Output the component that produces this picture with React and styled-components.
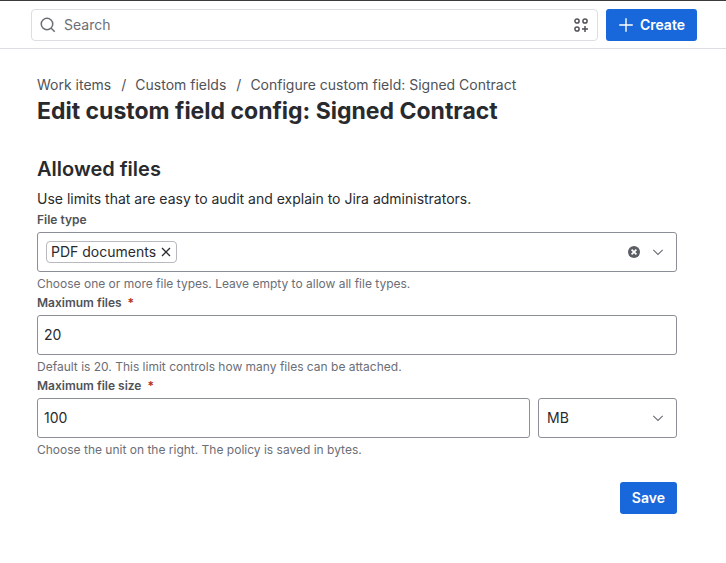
import React, { useState } from 'react'
import styled, { createGlobalStyle } from 'styled-components'

const App = () => {
    const [types, setTypes] = useState(['PDF documents'])
    const [maxFiles, setMaxFiles] = useState('20')
    const [maxSize, setMaxSize] = useState('100')
    const [unit, setUnit] = useState('MB')

    return (
        <>
            <GlobalStyle />
            <TopBar>
                <SearchBox>
                    <SearchIcon />
                    <SearchInput type="search" placeholder="Search" aria-label="Search" />
                    <IconButton type="button" aria-label="Browse apps">
                        <AppsIcon />
                    </IconButton>
                </SearchBox>
                <PrimaryButton type="button">
                    <PlusIcon />
                    Create
                </PrimaryButton>
            </TopBar>
            <Main>
                <Breadcrumbs aria-label="Breadcrumbs">
                    <Crumb href="#work-items">Work items</Crumb>
                    <Separator>/</Separator>
                    <Crumb href="#custom-fields">Custom fields</Crumb>
                    <Separator>/</Separator>
                    <Crumb href="#configure">Configure custom field: Signed Contract</Crumb>
                </Breadcrumbs>
                <Title>Edit custom field config: Signed Contract</Title>
                <Form onSubmit={e => e.preventDefault()}>
                    <SectionTitle>Allowed files</SectionTitle>
                    <Description>Use limits that are easy to audit and explain to Jira administrators.</Description>

                    <Label htmlFor="file-type">File type</Label>
                    <MultiSelect>
                        {types.map(type => (
                            <Chip key={type}>
                                {type}
                                <IconButton
                                    type="button"
                                    aria-label={`Remove ${type}`}
                                    onClick={() => setTypes(types.filter(t => t !== type))}
                                >
                                    <CrossIcon />
                                </IconButton>
                            </Chip>
                        ))}
                        <ComboInput id="file-type" type="text" role="combobox" aria-expanded="false" />
                        <IconButton type="button" aria-label="Clear file types" onClick={() => setTypes([])}>
                            <ClearIcon />
                        </IconButton>
                        <IconButton type="button" aria-label="Open file types">
                            <ChevronIcon />
                        </IconButton>
                    </MultiSelect>
                    <Helper>Choose one or more file types. Leave empty to allow all file types.</Helper>

                    <Label htmlFor="max-files">
                        Maximum files<Required>*</Required>
                    </Label>
                    <TextInput id="max-files" type="text" value={maxFiles} onChange={e => setMaxFiles(e.target.value)} />
                    <Helper>Default is 20. This limit controls how many files can be attached.</Helper>

                    <Label htmlFor="max-size">
                        Maximum file size<Required>*</Required>
                    </Label>
                    <SizeRow>
                        <TextInput id="max-size" type="text" value={maxSize} onChange={e => setMaxSize(e.target.value)} />
                        <UnitBox>
                            <UnitSelect aria-label="Unit" value={unit} onChange={e => setUnit(e.target.value)}>
                                <option>KB</option>
                                <option>MB</option>
                                <option>GB</option>
                            </UnitSelect>
                            <ChevronIcon />
                        </UnitBox>
                    </SizeRow>
                    <Helper>Choose the unit on the right. The policy is saved in bytes.</Helper>

                    <Actions>
                        <PrimaryButton type="submit">Save</PrimaryButton>
                    </Actions>
                </Form>
            </Main>
        </>
    )
}

export default App

const SearchIcon = () => (
    <svg width="16" height="16" viewBox="0 0 16 16" fill="none" stroke="#6b6e76" strokeWidth="1.5" aria-hidden="true">
        <circle cx="7" cy="7" r="5.75" />
        <path d="M11 11l3.75 3.75" />
    </svg>
)

const AppsIcon = () => (
    <svg width="16" height="16" viewBox="0 0 16 16" fill="none" stroke="#505258" strokeWidth="1.5" aria-hidden="true">
        <circle cx="4" cy="4" r="2.1" />
        <circle cx="12" cy="4" r="2.1" />
        <circle cx="4" cy="12" r="2.1" />
        <path d="M12 9v6M9 12h6" />
    </svg>
)

const PlusIcon = () => (
    <svg width="16" height="16" viewBox="0 0 16 16" fill="none" stroke="#fff" strokeWidth="1.4" aria-hidden="true">
        <path d="M8 1.25v13.5M1.25 8h13.5" />
    </svg>
)

const CrossIcon = () => (
    <svg width="12" height="12" viewBox="0 0 12 12" fill="none" stroke="#292a2e" strokeWidth="1.3" aria-hidden="true">
        <path d="M2 2l8 8M10 2l-8 8" />
    </svg>
)

const ClearIcon = () => (
    <svg width="12" height="12" viewBox="0 0 12 12" fill="none" aria-hidden="true">
        <circle cx="6" cy="6" r="6" fill="#5c5e66" />
        <path d="M3.6 3.6l4.8 4.8M8.4 3.6l-4.8 4.8" stroke="#fff" strokeWidth="1.7" />
    </svg>
)

const ChevronIcon = () => (
    <svg width="12" height="12" viewBox="0 0 12 12" fill="none" stroke="#6b6e76" strokeWidth="1.1" aria-hidden="true">
        <path d="M1.3 3.8L6 8.5l4.7-4.7" />
    </svg>
)

const GlobalStyle = createGlobalStyle`
    * {
        box-sizing: border-box;
    }

    body {
        margin: 0;
        background-color: #fff;
        color: #292a2e;
        font-family: Inter, 'Liberation Sans', sans-serif;
        font-size: 14px;
        line-height: 20px;
    }

    svg {
        display: block;
        flex-shrink: 0;
    }
`

const TopBar = styled.header`
    display: flex;
    align-items: center;
    gap: 8px;
    padding: 8px 29px 7px 31px;
    border-top: 1px solid #3b3b3e;
    border-bottom: 1px solid #dddee1;
`

const SearchBox = styled.div`
    display: flex;
    flex: 1;
    align-items: center;
    gap: 8px;
    height: 32px;
    padding: 0 8px;
    border: 1px solid #dddee1;
    border-radius: 4px;
`

const SearchInput = styled.input`
    flex: 1;
    min-width: 0;
    padding: 0;
    border: 0;
    outline: 0;
    background: none;
    font: inherit;

    &::placeholder {
        color: #6b6e76;
        opacity: 1;
    }
`

const IconButton = styled.button`
    display: flex;
    padding: 0;
    border: 0;
    background: none;
    cursor: pointer;
`

const PrimaryButton = styled.button`
    display: flex;
    align-items: center;
    gap: 6px;
    height: 32px;
    padding: 0 12px;
    border: 0;
    border-radius: 3px;
    background-color: #1868db;
    color: #fff;
    font: inherit;
    font-weight: 600;
    cursor: pointer;
`

const Main = styled.main`
    padding: 26px 49px 24px 37px;
`

const Breadcrumbs = styled.nav`
    display: flex;
    color: #505258;
`

const Crumb = styled.a`
    color: inherit;
    text-decoration: none;
`

const Separator = styled.span`
    padding: 0 9px 0 10px;
`

const Title = styled.h1`
    margin: 2px 0 0;
    font-size: 23px;
    font-weight: 700;
    line-height: 28px;
`

const Form = styled.form`
    display: flex;
    flex-direction: column;
    margin-top: 32px;
`

const SectionTitle = styled.h2`
    margin: 0 0 8px;
    font-size: 20px;
    font-weight: 600;
    line-height: 24px;
`

const Description = styled.p`
    margin: 0;
`

const Label = styled.label`
    margin: 3px 0 4px;
    color: #505258;
    font-size: 12px;
    font-weight: 600;
    line-height: 16px;
`

const Required = styled.span`
    margin-left: 6px;
    color: #ae2e24;
`

const TextInput = styled.input`
    width: 100%;
    min-width: 0;
    height: 40px;
    padding: 0 6px 1px;
    border: 1px solid #8c8f97;
    border-radius: 3px;
    background-color: #fff;
    color: #292a2e;
    font: inherit;
`

const MultiSelect = styled.div`
    display: flex;
    align-items: center;
    gap: 12px;
    height: 40px;
    padding: 0 12px 0 8px;
    border: 1px solid #8c8f97;
    border-radius: 3px;
`

const Chip = styled.span`
    display: flex;
    align-items: center;
    gap: 4px;
    height: 22px;
    padding: 0 4px;
    border: 1px solid #b7b9be;
    border-radius: 4px;
`

const ComboInput = styled.input`
    flex: 1;
    min-width: 0;
    padding: 0;
    border: 0;
    outline: 0;
    background: none;
    font: inherit;
`

const Helper = styled.p`
    margin: 4px 0 0;
    color: #6b6e76;
    font-size: 12px;
    line-height: 16px;
`

const SizeRow = styled.div`
    display: flex;
    gap: 8px;
`

const UnitBox = styled.div`
    display: grid;
    flex: 0 0 139px;
    align-items: center;

    > * {
        grid-area: 1 / 1;
    }

    > svg {
        justify-self: end;
        margin-right: 13px;
        pointer-events: none;
    }
`

const UnitSelect = styled.select`
    width: 100%;
    height: 40px;
    padding: 0 32px 0 8px;
    border: 1px solid #8c8f97;
    border-radius: 3px;
    background-color: #fff;
    color: #292a2e;
    font: inherit;
    appearance: none;
`

const Actions = styled.div`
    display: flex;
    justify-content: flex-end;
    margin-top: 24px;
`
